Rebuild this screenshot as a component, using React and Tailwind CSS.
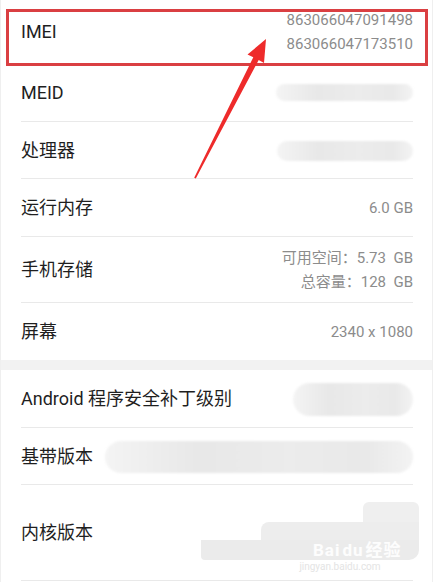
import React from 'react';

const FONT = { fontFamily: 'Roboto, "Noto Sans CJK SC", "Noto Sans", sans-serif' };

const Smudge = ({ className = '' }) => (
    <div className={`rounded-full bg-[linear-gradient(to_right,#f4f4f4,#e8e8e8_30%,#ececec_60%,#e9e9e9_85%,#f3f3f3)] blur-[1px] ${className}`} />
);

const Row = ({ label, children, h, last }) => (
    <div className="pl-5 pr-[19px]">
        <div className={`flex items-center justify-between ${h} ${last ? '' : 'border-b border-[#e9e9e9]'}`}>
            <span className="text-[18px] text-[#1f1f1f] whitespace-nowrap">{label}</span>
            {children}
        </div>
    </div>
);

const Value = ({ children }) => (
    <div className="text-right text-[15px] leading-[24px] text-[#8c8c8c]">{children}</div>
);

const Arrow = () => (
    <svg className="absolute left-0 top-0 pointer-events-none" width="433" height="200" viewBox="0 0 433 200">
        <polygon
            points="265,39 263,63 257.7,60 194.8,178.5 193.2,177.8 252.3,57.2 246.5,54.5"
            fill="#ee2b2b"
        />
    </svg>
);

const App = () => {
    return (
        <div className="relative w-[433px] h-[582px] overflow-hidden bg-white border-x border-[#efefef]" style={FONT}>
            <Row label="IMEI" h="h-[64px]">
                <Value>
                    <div>863066047091498</div>
                    <div>863066047173510</div>
                </Value>
            </Row>
            <Row label="MEID" h="h-[58px]">
                <Smudge className="w-[137px] h-[17px]" />
            </Row>
            <Row label="处理器" h="h-[57px]">
                <Smudge className="w-[136px] h-[20px] mt-[2px]" />
            </Row>
            <Row label="运行内存" h="h-[58px]">
                <Value>6.0 GB</Value>
            </Row>
            <Row label="手机存储" h="h-[66px]">
                <Value>
                    <div>可用空间：5.73&nbsp; GB</div>
                    <div>总容量：128&nbsp; GB</div>
                </Value>
            </Row>
            <Row label="屏幕" h="h-[57px]" last>
                <Value>2340 x 1080</Value>
            </Row>

            <div className="h-[10px] bg-[#f2f2f2]" />

            <Row label="Android 程序安全补丁级别" h="h-[58px]">
                <Smudge className="w-[120px] h-[33px] mt-[2px]" />
            </Row>
            <Row label="基带版本" h="h-[57px]">
                <Smudge className="ml-3 flex-1 h-[32px] mt-[2px]" />
            </Row>
            <div className="pl-5 pr-[19px]">
                <div className="relative flex items-center h-[96px] border-b border-[#e9e9e9]">
                    <span className="text-[18px] text-[#1f1f1f]">内核版本</span>
                    <div className="absolute right-[-6px] top-[17px] flex flex-col items-end">
                        <div className="w-[56px] h-[20px] bg-[#efefef] rounded-t-[6px]" />
                        <div className="w-[158px] h-[18px] bg-[#ededed] rounded-tl-[8px]" />
                        <div className="relative w-[218px] h-[20px] bg-[#ebebeb] rounded-bl-[4px] rounded-br-[10px]">
                            <span className="absolute left-[112px] top-[-2px] text-[17px] font-bold tracking-[1px] text-white/90">Bai<span className="mx-[2px]">du</span>经验</span>
                        </div>
                        <div className="w-[218px] h-[14px] text-center text-[10px] leading-[14px] text-[#e4e4e4] pl-[60px]">jingyan.baidu.com</div>
                    </div>
                </div>
            </div>

            <div className="absolute left-[5px] top-[9px] w-[422px] h-[57px] border-[3px] border-[#da3f42]" />
            <Arrow />
        </div>
    );
};

export default App;
